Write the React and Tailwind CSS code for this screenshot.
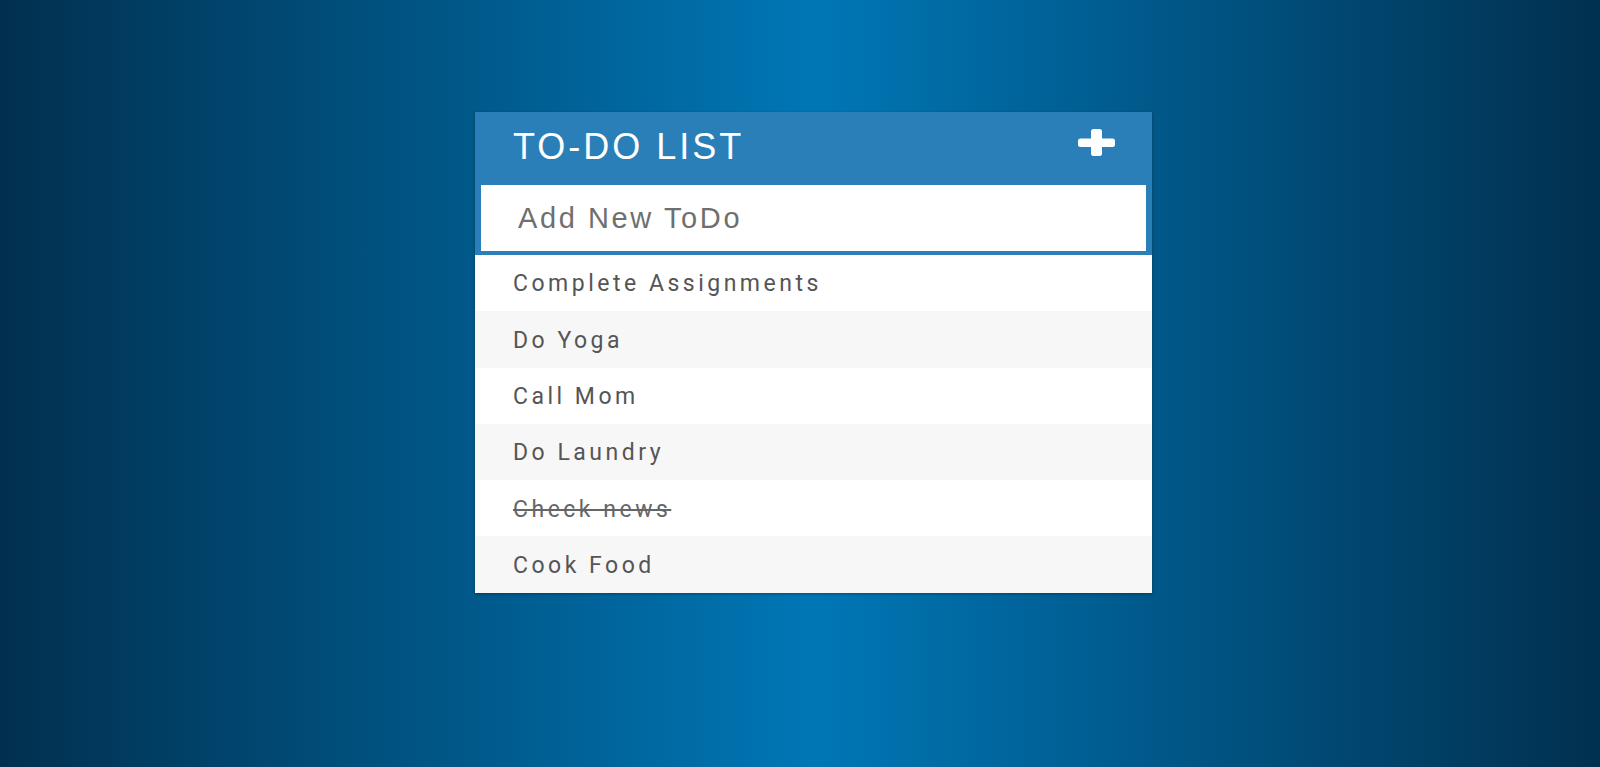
import React, { useState } from 'react';

const TODOS = [
  { id: 1, text: 'Complete Assignments', done: false },
  { id: 2, text: 'Do Yoga', done: false },
  { id: 3, text: 'Call Mom', done: false },
  { id: 4, text: 'Do Laundry', done: false },
  { id: 5, text: 'Check news', done: true },
  { id: 6, text: 'Cook Food', done: false },
];

const PlusIcon = () => (
  <svg width="37" height="27" viewBox="0 0 37 27" className="block">
    <rect x="0" y="9.5" width="37" height="8.5" rx="2.5" fill="#ffffff" />
    <rect x="13" y="0" width="11" height="27" rx="2.5" fill="#ffffff" />
  </svg>
);

export default function App() {
  const [todos, setTodos] = useState(TODOS);
  const [draft, setDraft] = useState('');

  const toggle = (id) =>
    setTodos((list) => list.map((t) => (t.id === id ? { ...t, done: !t.done } : t)));

  const add = (e) => {
    if (e.key === 'Enter' && draft.trim()) {
      setTodos((list) => [...list, { id: Date.now(), text: draft.trim(), done: false }]);
      setDraft('');
    }
  };

  return (
    <div className="min-h-[767px] w-full bg-[linear-gradient(to_right,#01304f_0%,#0077b6_51%,#01304f_100%)] pt-[112px] font-['Roboto',sans-serif]">
      <div className="ml-[475px] w-[677px] bg-white shadow-[0_1px_3px_rgba(0,0,0,0.35)]">
        <div className="bg-[#2a7fb8]">
          <div className="flex h-[73px] items-center justify-between pl-[38px] pr-[37px]">
            <h1 className="-mt-[3px] font-['Liberation_Sans',Arial,sans-serif] text-[36px] leading-none tracking-[3px] text-white">
              TO-DO LIST
            </h1>
            <button className="-mt-[13px]">
              <PlusIcon />
            </button>
          </div>
          <div className="px-[6px] pb-[4px]">
            <input
              autoFocus
              value={draft}
              onChange={(e) => setDraft(e.target.value)}
              onKeyDown={add}
              placeholder="Add New ToDo"
              className="block h-[66px] w-full bg-white pl-[37px] font-['Liberation_Sans',Arial,sans-serif] text-[29px] tracking-[2.6px] text-[#555] caret-[#555] outline-none placeholder:text-[#6f6f6f]"
            />
          </div>
        </div>
        <ul>
          {todos.map((t, i) => (
            <li
              key={t.id}
              onClick={() => toggle(t.id)}
              className={`flex h-[56.3px] cursor-pointer items-center pl-[38px] pt-[3px] text-[23px] tracking-[3.5px] ${
                i % 2 === 1 ? 'bg-[#f7f7f7]' : 'bg-white'
              } ${t.done ? 'text-[#666] line-through' : 'text-[#555]'}`}
            >
              {t.text}
            </li>
          ))}
        </ul>
      </div>
    </div>
  );
}
